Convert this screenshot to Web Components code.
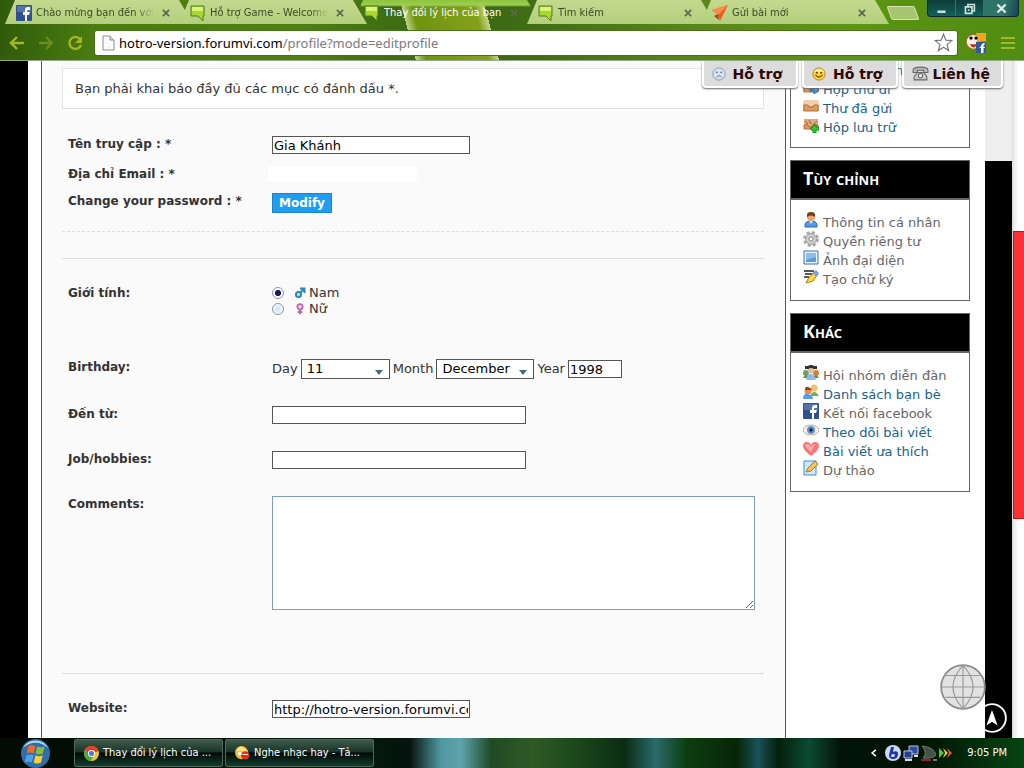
<!DOCTYPE html>
<html lang="vi">
<head>
<meta charset="utf-8">
<title>Thay đổi lý lịch của bạn</title>
<style>
  html, body { height: 100%; margin: 0; }
  body { font: 13px/16px "DejaVu Sans", Verdana, sans-serif; color: #333; background: #000; overflow: hidden;
    --ui: "DejaVu Sans Condensed", "DejaVu Sans", Tahoma, sans-serif; }
</style>
</head>
<body>
<browser-desktop></browser-desktop>
<script>
const ICONS = {
  facebook: '<rect width="16" height="16" rx="1" fill="#30508f"/><rect x="1" y="1" width="14" height="6" fill="#5572ab"/><path d="M9 16V10H7V7h2V5q0-3 3-3h2v3h-2q-1 0-1 1v1h3l-1 3h-2v6z" fill="#fff"/>',
  bubble: '<path d="M1 1h13v10h-1v5l-5-5H1z" fill="#a5d92d" stroke="#557b16"/><path d="M2 2h11v4H2z" fill="#d8f47c"/>',
  bird: '<path d="M0 5 16 0 8 16 6 10z" fill="#ef5a26"/><path d="M0 5 16 0 6 10z" fill="#ff8a4a"/><path d="M2 11l4-2 1 6z" fill="#b83c18"/>',
  page: '<path d="M3 1h7l4 4v10H3z" fill="#fafafa" stroke="#8e8e8e"/><path d="M10 1v4h4" fill="#ddd" stroke="#8e8e8e"/>',
  back: '<path d="M15 8H3M8 2 2 8l6 6" fill="none" stroke="#a6b62a" stroke-width="2.4"/>',
  forward: '<path d="M1 8h12M8 2l6 6-6 6" fill="none" stroke="#668c22" stroke-width="2.4"/>',
  reload: '<path d="M13 4A6 6 0 1 0 14 10" fill="none" stroke="#a6b62a" stroke-width="2.4"/><path d="M15 1v7H8z" fill="#a6b62a"/>',
  star: '<path d="M8 1l2 5 5 .4-4 3.400 1.300 5L8 12l-4.300 2.800L5 9.800 1 6.400 6 6z" fill="#fff" stroke="#777"/>',
  bee: '<circle cx="6" cy="7" r="6" fill="#f4f0e4" stroke="#9b6b25"/><path d="M8 0h8v7H9z" fill="#f3a51f"/><circle cx="4" cy="4" r="1.300"/><circle cx="8" cy="4" r="1.300"/><path d="M3 9q3 5 6 0z" fill="#c7281e"/><rect x="8" y="7" width="8" height="9" fill="#34569b"/><path d="M12 16v-4h-1v-1h1q0-3 3-3v1q-1 0-1 2h1v1h-1v4z" fill="#fff"/>',
  menu: '<path d="M1 3h14M1 8h14M1 13h14" stroke="#a3b830" stroke-width="2"/>',
  sad: '<circle cx="8" cy="8" r="7" fill="#d9e3ee" stroke="#7f97b5"/><circle cx="5.500" cy="6" r="1" fill="#55708f"/><circle cx="10.500" cy="6" r="1" fill="#55708f"/><path d="M5 12q3-4 6 0" fill="none" stroke="#55708f"/>',
  smile: '<circle cx="8" cy="8" r="7" fill="#ffd63a" stroke="#b9781a"/><path d="M2 6q2-4 6-4t6 4q-6-2-12 0" fill="#fff2a3"/><circle cx="5.500" cy="6.500" r="1.200" fill="#6d3f08"/><circle cx="10.500" cy="6.500" r="1.200" fill="#6d3f08"/><path d="M4 9q4 5 8 0" fill="none" stroke="#6d3f08" stroke-width="1.300"/>',
  phone: '<path d="M1 5q0-3 7-3t7 3v2h-4V5H5v2H1z" fill="#bbb" stroke="#666"/><path d="M5 7h6l3 4v3H2v-3z" fill="#ccc" stroke="#666"/><circle cx="8" cy="10" r="2" fill="#eee" stroke="#666"/>',
  tray: '<path d="M1 2h14l1 6v5H0V8z" fill="#e2a878"/><path d="M1 2h14v6H1z" fill="#f3cfa9"/><path d="M1 7h4l1 2h4l1-2h4v6H1z" fill="#dc9a62" stroke="#b5733f"/>',
  traySend: '<path d="M1 2h14l1 6v5H0V8z" fill="#e2a878"/><path d="M1 7h4l1 2h4l1-2h4v6H1z" fill="#dc9a62" stroke="#b5733f"/><path d="M7 10h4V7l5 4-5 4v-3H7z" fill="#4c9be0" stroke="#2568a8"/>',
  traySave: '<path d="M1 2h14v10H1z" fill="#e2a878"/><path d="M2 4l3 3M6 3l2 4M14 4l-4 4" stroke="#9c6232"/><path d="M1 8h4l1 2h4l1-2h4v4H1z" fill="#dc9a62" stroke="#b5733f"/><path d="M10 8h3v2h3v3h-3v3h-3v-3H8v-3h2z" fill="#36c936" stroke="#138a1c"/>',
  user: '<path d="M2 15q-1-6 6-6t6 6z" fill="#4f9be6" stroke="#2a66ad"/><circle cx="8" cy="5" r="4" fill="#f2a46c"/><path d="M4 5q-1-5 4-5t4 5q-4-3-8 0" fill="#74401b"/><path d="M6 9l2 3 2-3" fill="#cfe6ff"/>',
  gear: '<circle cx="8" cy="8" r="6.500" fill="none" stroke="#a8a8a8" stroke-width="3" stroke-dasharray="3 2.100"/><circle cx="8" cy="8" r="5.500" fill="#ccc" stroke="#a0a0a0"/><circle cx="8" cy="8" r="2" fill="#fff" stroke="#888"/>',
  image: '<path d="M1 1h14v13H1z" fill="#e9f4ff" stroke="#3a70b5"/><path d="M3 3h10v9H3z" fill="#5b9bd8"/><path d="M3 3h10v4l-10 3z" fill="#8cbfea"/>',
  sign: '<path d="M1 2h10M2 5h8M1 8h5" stroke="#222" stroke-width="1.500"/><path d="M3 14l2-4 6-7 4 2-5 7z" fill="#ffd83b" stroke="#af7d17"/><path d="M10 4l3-3 3 3-3 4z" fill="#7c9fe3"/>',
  group: '<circle cx="3" cy="8" r="3" fill="#6f9e6d"/><circle cx="13" cy="8" r="3" fill="#e27a35"/><path d="M0 13q3-6 6 0zM10 13q3-6 6 0z" fill="#4d9a4e"/><circle cx="8" cy="5" r="3.500" fill="#dfc0a1"/><path d="M2 1h4v3H2zM10 1h4v3h-4zM4 4q0-4 4-4t4 4q-4-2-8 0" fill="#333"/><path d="M3 15q1-7 5-6t5 6z" fill="#8fb9ea"/>',
  friends: '<circle cx="11" cy="4" r="3.500" fill="#f0c070"/><path d="M7 12q4-8 9 0z" fill="#72b04a"/><circle cx="5" cy="7" r="3.500" fill="#e98d57"/><path d="M2 6q0-4 3-3t4 3z" fill="#8a4420"/><path d="M0 15q0-6 5-5t5 5z" fill="#5a9de0"/>',
  eye: '<ellipse cx="8" cy="8" rx="8" ry="5" fill="#f5ede9" stroke="#cdaa9c"/><circle cx="8" cy="8" r="4" fill="#5a93d3"/><circle cx="8" cy="8" r="1.700" fill="#123"/>',
  heart: '<path d="M8 15Q0 9 0 5q0-4 4-4 3 0 4 3 1-3 4-3 4 0 4 4 0 4-8 10z" fill="#f4777b"/><path d="M2 5q0-2 2-2 3 0 4 3 1-3 4-3l-4 8z" fill="#f9aaab"/>',
  draft: '<path d="M1 1h12v14H1z" fill="#cfe8fb" stroke="#3f8dcf"/><path d="M3 12l2-4 7-7 3 3-7 7z" fill="#f9c64b" stroke="#a6752a"/>',
  male: '<circle cx="6" cy="10" r="3.500" fill="#a7dff1" stroke="#2688ab" stroke-width="2.400"/><path d="M8 8l5-5M8 2h6v6" fill="none" stroke="#2688ab" stroke-width="2.600"/>',
  female: '<circle cx="8" cy="5" r="3.500" fill="#f4d4f0" stroke="#b56bad" stroke-width="2.400"/><path d="M8 9v6M5 12h6" stroke="#b56bad" stroke-width="2.400"/>',
  chrome: '<circle cx="8" cy="8" r="8" fill="#f0c52c"/><path d="M1 4A8 8 0 0 1 15 4L15 6H8L5 9z" fill="#e0402d"/><path d="M1 4A8 8 0 0 0 7 16l3-5-4-1z" fill="#4aa648"/><circle cx="8" cy="8" r="3.700" fill="#fff"/><circle cx="8" cy="8" r="2.700" fill="#3f7de0"/>',
  music: '<circle cx="7" cy="7" r="7" fill="#f7b530"/><path d="M1 5q4-7 10-2l3 3z" fill="#ffe37b"/><circle cx="11" cy="10" r="4.500" fill="#d92d26"/><circle cx="5" cy="8" r="2" fill="#fff"/><path d="M8 9h6" stroke="#fff"/>',
  logo: '<circle cx="8" cy="8" r="8" fill="#2e6ea9"/><path d="M1 5A8 8 0 0 1 15 5Q8-1 1 5" fill="#a9d5ee"/><path d="M4 4q2-1 4 0L7 8q-2-1-4 0z" fill="#ef6b2c"/><path d="M9 4q2 1 4 0l-1 4q-2 1-4 0z" fill="#86bf3b"/><path d="M3 9q2-1 4 0l-1 4q-2-1-4 0z" fill="#4ba4e8"/><path d="M8 9q2 1 4 0l-1 4q-2 1-4 0z" fill="#fbd033"/>',
  orb: '<circle cx="8" cy="8" r="8" fill="#c9dcf2"/><path d="M6 2h3L8 7q5-2 5 2 0 5-5 5-4 0-4-4zM8 9q-2 0-2 2 0 1 1 1 3 0 3-2 0-1-2-1" fill="#2233a8" fill-rule="evenodd"/>',
  network: '<path d="M6 1h9v8H6z" fill="#304a9c" stroke="#b9c5ee"/><path d="M1 6h8v7H1z" fill="#28408c" stroke="#b9c5ee"/><path d="M2 15h7M11 11h4" stroke="#d8dcf0" stroke-width="2"/>',
  shark: '<path d="M1 1q12 1 14 9-3 4-13 3 5-5-1-12" fill="#425446" stroke="#6a7a6c"/><path d="M0 15h10" stroke="#d02020" stroke-width="1.500"/><path d="M12 15h4" stroke="#ddd"/>',
  arrows: '<path d="M0 3l5 5-5 5z" fill="#4cc44a"/><path d="M4 3l5 5-5 5 2-5z" fill="#f0d040"/><path d="M8 3l5 5-5 5 2-5z" fill="#ef5540"/>',
  globe: '<circle cx="8" cy="8" r="7.600" fill="#e0e0e0" fill-opacity=".95" stroke="#8b8b8b" stroke-width=".6"/><path d="M8 .5v15M.5 8h15M2 4h12M2 11.600h12M8 .5Q1 8 8 15.500M8 .5Q15 8 8 15.500" fill="none" stroke="#999" stroke-width=".4"/>',
  up: '<circle cx="8" cy="8" r="7.400" fill="#000" stroke="#fff" stroke-width="1"/><path d="M8 3.700l3 8.300-3-2-3 2z" fill="#fff"/>',
  min: '<path d="M3 12h10" stroke="#cfe0dc" stroke-width="3"/>',
  restore: '<path d="M6 5V3h8v8h-2M3 6h8v8H3z" fill="none" stroke="#cfe0dc" stroke-width="2"/><rect x="6" y="9" width="2" height="2" fill="#cfe0dc"/>',
  close: '<path d="M3 3l10 10M13 3 3 13" stroke="currentColor" stroke-width="2.800"/>',
  chevron: '<path d="M11 3 5 8l6 5" fill="none" stroke="#fff" stroke-width="2.500"/>'
};

class UiIcon extends HTMLElement {
  static observedAttributes = ['name'];
  constructor() {
    super();
    this.attachShadow({ mode: 'open' }).innerHTML = '<style>:host{display:block;flex:none;width:16px;height:16px}svg{display:block;width:100%;height:100%}</style><svg viewBox="0 0 16 16" aria-hidden="true"></svg>';
  }
  attributeChangedCallback(attr, old, value) {
    this.shadowRoot.querySelector('svg').innerHTML = ICONS[value] || '';
  }
}
customElements.define('ui-icon', UiIcon);

function define(name, html, setup) {
  const t = document.createElement('template');
  t.innerHTML = html;
  customElements.define(name, class extends HTMLElement {
    constructor() {
      super();
      this.attachShadow({ mode: 'open' }).append(t.content.cloneNode(true));
    }
    connectedCallback() { if (setup) setup(this, this.shadowRoot); }
  });
}
const passIcon = (el, root) => root.querySelector('ui-icon').setAttribute('name', el.getAttribute('icon'));

define('browser-tab', `<style>
  :host{display:flex;position:relative;flex:0 1 174px;min-width:0;height:24px;color:#3b4a26}
  .shape{position:absolute;inset:0 -14px 0 0;clip-path:polygon(10px 0,calc(100% - 14px) 0,100% 100%,0 100%);background:linear-gradient(#c3d98e,#b3cf7d)}
  :host([active]){color:#fff}
  :host([active]) .shape{background:linear-gradient(#8cc63a,#9ccc55 5px,transparent 7px)}
  .row{position:relative;display:flex;align-items:center;gap:4px;flex:1;min-width:0;padding:2px 8px 0 11px;font:11px/16px var(--ui)}
  .name{flex:1;min-width:0;overflow:hidden;white-space:nowrap;-webkit-mask-image:linear-gradient(90deg,#000 85%,transparent);mask-image:linear-gradient(90deg,#000 85%,transparent)}
  :host([active]) .name{-webkit-mask-image:none;mask-image:none}
  button{flex:none;border:0;background:none;padding:0;color:#5b6a4c;margin-left:3px}
  button ui-icon{width:10px;height:10px}
</style><div class="shape"></div><div class="row"><ui-icon></ui-icon><span class="name"><slot></slot></span><button type="button" aria-label="Đóng"><ui-icon name="close"></ui-icon></button></div>`, passIcon);

define('browser-chrome', `<style>
  :host{display:block;flex:none;background:
    linear-gradient(75deg,transparent 40%,#c4d48a 40%,#6f9410 41%,#86a01c 47%,#c4d48a 48%,transparent 48%),
    linear-gradient(90deg,#315b0b,#4a7c10 9%,#4e7f12 30%,#3f6d12 38%,#3d6a14 50%,#59861a 68%,#5e9414 82%,#4f8d10)}
  .strip{display:flex;height:25px;padding-left:5px;position:relative}
  .new{margin:6px 0 0 14px;width:28px;height:14px;padding:0;border:1px solid #d6e5ad;border-radius:2px;background:#a8c672;transform:skewX(20deg)}
  .win{position:absolute;right:5px;top:0;display:flex;background:#0a4a45;border:1px solid #123;border-top:0;border-radius:0 0 4px 4px;overflow:hidden}
  .win button{width:28px;height:16px;border:0;border-right:1px solid #3b716b;background:linear-gradient(#0f3c3a,#11605a);padding:0;display:flex;justify-content:center;align-items:center;color:#e2eeea}
  .win button:last-child{width:34px;border:0;background:linear-gradient(100deg,#2f7468 60%,#174458)}
  .win ui-icon{width:13px;height:13px}
  .bar{display:flex;align-items:center;height:36px;padding:0 8px 0 9px;box-sizing:border-box;border-bottom:1px solid #93a886}
  .nav{border:0;padding:0;background:none;margin-right:13px}
  .addr{flex:1;display:flex;align-items:center;min-width:0;height:24px;background:#fff;border-radius:2px;padding:0 4px 0 5px;gap:3px;box-sizing:border-box;box-shadow:0 0 0 1px #48701a;margin-left:-1px}
  .addr ui-icon[name=star]{width:19px;height:19px}
  .url{flex:1;min-width:0;font:13px/22px "Noto Sans","Open Sans",sans-serif;color:#7b7b7b;white-space:nowrap;overflow:hidden}
  .url b{font-weight:400;color:#000}
  .bee{width:20px;height:20px;margin:0 14px 0 9px}
</style>
<div class="strip">
  <browser-tab icon="facebook">Chào mừng bạn đến với</browser-tab>
  <browser-tab icon="bubble">Hỗ trợ Game - Welcome</browser-tab>
  <browser-tab icon="bubble" active>Thay đổi lý lịch của bạn</browser-tab>
  <browser-tab icon="bubble">Tìm kiếm</browser-tab>
  <browser-tab icon="bird">Gửi bài mới</browser-tab>
  <button class="new" type="button" aria-label="Thẻ mới"></button>
  <div class="win"><button type="button" aria-label="Thu nhỏ"><ui-icon name="min"></ui-icon></button><button type="button" aria-label="Khôi phục"><ui-icon name="restore"></ui-icon></button><button type="button" aria-label="Đóng"><ui-icon name="close"></ui-icon></button></div>
</div>
<div class="bar">
  <button class="nav" type="button" aria-label="Lùi"><ui-icon name="back"></ui-icon></button>
  <button class="nav" type="button" aria-label="Tiến"><ui-icon name="forward"></ui-icon></button>
  <button class="nav" type="button" aria-label="Tải lại"><ui-icon name="reload"></ui-icon></button>
  <div class="addr"><ui-icon name="page"></ui-icon><div class="url"><b>hotro-version.forumvi.com</b>/profile?mode=editprofile</div><ui-icon name="star"></ui-icon></div>
  <ui-icon class="bee" name="bee"></ui-icon><ui-icon name="menu"></ui-icon>
</div>`);

define('form-row', `<style>:host{display:grid;grid-template-columns:204px 1fr;align-items:start;padding-left:6px}
  .label{font-size:12px;font-weight:700;line-height:16px}.field{min-width:0}</style>
  <div class="label"><slot name="label"></slot></div><div class="field"><slot></slot></div>`);

define('profile-form', `<style>
  :host{display:block;padding:7px 21px 0 20px}
  .notice{border:1px solid #e3e3e3;background:#fff;padding:11px 12px;line-height:17px;margin:0 0 27px}
  form{margin:0}
  .name{height:30px}.mail{height:27px}.pass{height:38px}.sex{height:74px}.birth{height:47px}.line{height:45px}.comments{min-height:177px}
  hr{border:0;border-top:1px solid #ddd;margin:0}
  hr.dash{border-top-style:dashed;margin-bottom:26px}
  hr.gap{margin-bottom:26px}
  input,select,textarea{box-sizing:border-box;border:1px solid #555;border-radius:0;background:#fff;color:#000;font:13px/16px "DejaVu Sans",Verdana,sans-serif;margin:0}
  input{height:18px;padding:0 1px}
  .w198{width:198px}.w254{width:254px}.w54{width:54px}
  .w149{width:149px;border:0;margin-left:-4px;height:16px}
  select{appearance:none;height:20px;padding:0 5px;background:#fff url("data:image/svg+xml,%3Csvg xmlns='http://www.w3.org/2000/svg' width='8' height='5'%3E%3Cpath d='M0 0h8L4 5z' fill='%23486785'/%3E%3C/svg%3E") no-repeat right 6px top 10px}
  .day{width:89px}.month{width:98px}
  .date{display:flex;align-items:center;gap:3px;flex-wrap:wrap}
  button{display:block;height:20px;padding:0 6px;border:1px solid #1a85c4;background:#1f9df0;color:#fff;font:bold 12px/16px "DejaVu Sans",Verdana,sans-serif}
  .opt{display:flex;align-items:center;height:16px}
  .opt label{display:flex;align-items:center;gap:3px}
  .opt ui-icon{width:12px;height:12px;margin-left:10px}
  input[type=radio]{appearance:none;width:12px;height:12px;border:1px solid #8a96b4;border-radius:50%;background:radial-gradient(#d5dff2,#fff);padding:0}
  input[type=radio]:checked{background:radial-gradient(#1d1a5c 38%,#fff 50%)}
  textarea{display:block;width:calc(100% - 9px);height:114px;border-color:#7f9db9}
</style>
<p class="notice">Bạn phải khai báo đầy đủ các mục có đánh dấu *.</p>
<form>
  <form-row class="name"><label slot="label" for="user">Tên truy cập : *</label><input class="w198" id="user" value="Gia Khánh"></form-row>
  <form-row class="mail"><label slot="label" for="email">Địa chỉ Email : *</label><input class="w149" id="email"></form-row>
  <form-row class="pass"><label slot="label" for="modify">Change your password : *</label><button id="modify" type="button">Modify</button></form-row>
  <hr class="dash"><hr class="gap">
  <form-row class="sex"><span slot="label">Giới tính:</span>
    <div class="opt"><input type="radio" name="sex" id="male" checked><label for="male"><ui-icon name="male"></ui-icon>Nam</label></div>
    <div class="opt"><input type="radio" name="sex" id="female"><label for="female"><ui-icon name="female"></ui-icon>Nữ</label></div></form-row>
  <form-row class="birth"><span slot="label">Birthday:</span>
    <div class="date"><label for="day">Day</label><select class="day" id="day"><option>11</option></select><label for="month">Month</label><select class="month" id="month"><option>December</option></select><label for="year">Year</label><input class="w54" id="year" value="1998"></div></form-row>
  <form-row class="line"><label slot="label" for="from">Đến từ:</label><input class="w254" id="from"></form-row>
  <form-row class="line"><label slot="label" for="job">Job/hobbies:</label><input class="w254" id="job"></form-row>
  <form-row class="comments"><label slot="label" for="comments">Comments:</label><textarea id="comments"></textarea></form-row>
  <hr class="gap">
  <form-row class="line"><label slot="label" for="site">Website:</label><input class="w198" id="site" value="http://hotro-version.forumvi.com"></form-row>
</form>`);

define('side-link', `<style>:host{display:block;height:19px}a{display:flex;gap:4px;color:#666;text-decoration:none;line-height:19px;white-space:nowrap}:host([unread]) a{color:#1a6289}ui-icon{margin-top:-1px}</style>
<a href="#"><ui-icon></ui-icon><span><slot></slot></span></a>`, passIcon);

define('side-box', `<style>:host{display:block;border:1px solid #666;background:#fff}
  h2{margin:0;height:37px;border-bottom:2px solid #666;background:#000;color:#fff;padding-left:12px;font:small-caps bold 18px/34px "Open Sans","Noto Sans",sans-serif}
  .list{padding:13px 12px 11px}
  :host([bare]){border-top:0}:host([bare]) .list{padding:0 12px 10px}</style>
<h2></h2><div class="list"><slot></slot></div>`,
  (el, root) => {
    const h = root.querySelector('h2');
    if (el.hasAttribute('heading')) h.textContent = el.getAttribute('heading'); else h.remove();
  });

define('side-bar', `<style>:host{display:flex;flex-direction:column;gap:12px;width:180px;flex:none;padding:0 15px 0 4px;border-left:1px solid #555;background:#fff}</style>
<side-box bare><side-link unread icon="tray">Hộp thư đến</side-link><side-link unread icon="traySend">Hộp thư đi</side-link><side-link unread icon="tray">Thư đã gửi</side-link><side-link unread icon="traySave">Hộp lưu trữ</side-link></side-box>
<side-box heading="Tùy chỉnh"><side-link icon="user">Thông tin cá nhân</side-link><side-link icon="gear">Quyền riêng tư</side-link><side-link icon="image">Ảnh đại diện</side-link><side-link icon="sign">Tạo chữ ký</side-link></side-box>
<side-box heading="Khác"><side-link icon="group">Hội nhóm diễn đàn</side-link><side-link unread icon="friends">Danh sách bạn bè</side-link><side-link icon="facebook">Kết nối facebook</side-link><side-link unread icon="eye">Theo dõi bài viết</side-link><side-link unread icon="heart">Bài viết ưa thích</side-link><side-link icon="draft">Dự thảo</side-link></side-box>`);

define('support-button', `<style>:host{display:block}
  button{display:flex;align-items:center;gap:7px;height:27px;padding:0 14px 0 8px;border:2px solid #fff;border-top:0;border-radius:0 0 4px 4px;background:#dcdcdc;box-shadow:0 1px 2px 0 #666;color:#2b0505;font:bold 14px/20px "DejaVu Sans",Verdana,sans-serif;white-space:nowrap}
  ui-icon{width:14px;height:14px}
  :host([icon=phone]) button{padding-right:11px;gap:3px}
  :host([icon=phone]) ui-icon{width:17px;height:17px}</style>
<button type="button"><ui-icon></ui-icon><slot></slot></button>`, passIcon);

define('page-view', `<style>
  :host{display:flex;flex:1;min-height:0;position:relative;overflow:hidden;background:#000}
  .edge{flex:none;width:28px}
  .margin{flex:none;width:13px;background:#fff}
  profile-form{flex:1;min-width:0;border-left:1px solid #555;background:#fafafa}
  .right{flex:none;width:27px;background:linear-gradient(#eee 100px,#000 100px)}
  .scroll{flex:none;width:12px;border-left:1px solid #ddd;box-sizing:border-box;background:linear-gradient(90deg,#e6e6e6,#fff 5px);padding-top:170px}
  .thumb{height:288px;background:#fb3235;border:1px solid #c01518;border-right:0;box-sizing:border-box}
  .support{position:absolute;top:0;right:21px;display:flex;gap:4px}
  .globe{position:absolute;right:38px;bottom:28px;width:46px;height:46px}
  .up{position:absolute;right:17px;bottom:5px;width:30px;height:30px;clip-path:inset(0 0 0 8px)}
</style>
<div class="edge"></div><div class="margin"></div><profile-form></profile-form><side-bar></side-bar><div class="right"></div><div class="scroll"><div class="thumb"></div></div>
<div class="support"><support-button icon="sad">Hỗ trợ</support-button><support-button icon="smile">Hỗ trợ</support-button><support-button icon="phone">Liên hệ</support-button></div>
<ui-icon class="up" name="up"></ui-icon><ui-icon class="globe" name="globe"></ui-icon>`);

define('task-button', `<style>:host{display:block}button{display:flex;align-items:center;gap:4px;width:149px;height:28px;padding:0 9px;border:1px solid #52665a;border-radius:2px;background:linear-gradient(#405b4b,#18352a 45%,#020805 50%,#10402f);color:#fff;font:11px/16px var(--ui);white-space:nowrap}ui-icon{width:15px;height:15px}</style>
<button type="button"><ui-icon></ui-icon><slot></slot></button>`, passIcon);

define('task-bar', `<style>
  :host{display:flex;align-items:center;flex:none;height:30px;box-sizing:border-box;padding:0 17px 0 19px;color:#fff;font:11px/16px var(--ui);
  background:linear-gradient(90deg,#020b04,#041a0c 36%,#05130c 40%,#4f97a0 43%,#5fa3ab 45%,#1f4a26 48%,#2f5a25 52%,#1d4a1c 56%,#0b2c14 61%,#2b6a6b 64%,#0d3f0f 67%,#062508 72%,#1a5258 74%,#03200a 76%,#0c4a34 79%,#02140a 82%,#011304 90%,#064411)}
  .start{border:0;background:none;padding:0;margin-right:22px}.start ui-icon{width:33px;height:29px}
  .tasks{display:flex;gap:2px;flex:1}
  .tray{display:flex;align-items:center;gap:2px}
  .chev{width:10px;height:12px;margin-right:4px}
  time{margin-left:10px}
</style>
<button class="start" type="button" aria-label="Start"><ui-icon name="logo"></ui-icon></button>
<div class="tasks"><task-button icon="chrome">Thay đổi lý lịch của ...</task-button><task-button icon="music">Nghe nhạc hay - Tả...</task-button></div>
<div class="tray"><ui-icon class="chev" name="chevron"></ui-icon><ui-icon name="orb"></ui-icon><ui-icon name="network"></ui-icon><ui-icon name="shark"></ui-icon><ui-icon name="arrows"></ui-icon><time>9:05 PM</time></div>`);

define('browser-desktop', `<style>:host{display:flex;flex-direction:column;height:100vh}</style><browser-chrome></browser-chrome><page-view></page-view><task-bar></task-bar>`);
</script>
</body>
</html>
